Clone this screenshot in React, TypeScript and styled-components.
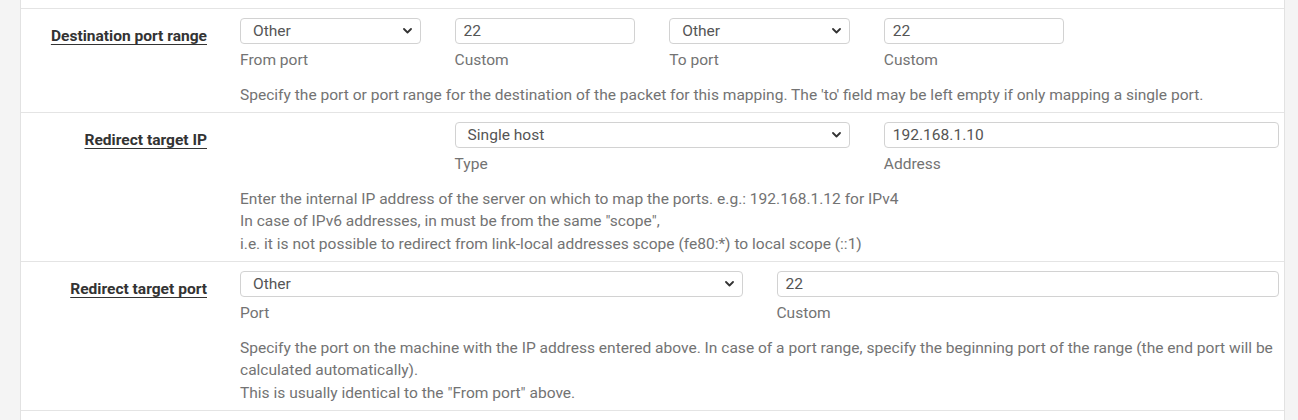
import React from "react";
import styled, { createGlobalStyle } from "styled-components";

const GlobalStyle = createGlobalStyle`
  html, body { margin: 0; padding: 0; }
  body {
    background: #f4f4f4;
    font-family: Roboto, "Liberation Sans", sans-serif;
    font-size: 15.55px;
    line-height: 22.5px;
    color: #333;
  }
`;

const Page = styled.div`
  padding: 0 13px 0 20px;
  height: 420px;
  overflow: hidden;
`;

const Panel = styled.div`
  background: #fff;
  border-left: 1px solid #e2e2e2;
  border-right: 1px solid #e2e2e2;
  padding-top: 8px;
  height: 412px;
`;

const Row = styled.div`
  display: grid;
  grid-template-columns: 219px 1039px;
  border-top: 1px solid #e4e4e4;
  padding: 9px 0 6px;
  &:last-child { border-bottom: 1px solid #e4e4e4; }
`;

const Label = styled.div`
  text-align: right;
  padding: 7px 33px 0 0;
  font-weight: 700;
  color: #333;
`;

const LabelText = styled.span`
  text-decoration: underline;
  text-decoration-thickness: 1px;
  text-underline-offset: 3px;
`;

const Content = styled.div`
  display: grid;
  grid-template-columns: repeat(10, 1fr);
  column-gap: 34px;
`;

const Field = styled.div<{ $start: number; $span: number }>`
  grid-column: ${(p) => p.$start} / span ${(p) => p.$span};
  display: flex;
  flex-direction: column;
`;

const Control = styled.div`
  box-sizing: border-box;
  height: 26px;
  border: 1px solid #d2d2d2;
  border-radius: 4px;
  background: #fff;
  color: #555;
  display: flex;
  align-items: center;
`;

const InputText = styled.span`
  padding-left: 8px;
`;

const SelectText = styled.span`
  padding-left: 12px;
  flex: 1;
`;

const Chevron = styled.svg`
  width: 9px;
  height: 6px;
  margin-right: 8px;
`;

const SubLabel = styled.div`
  margin-top: 5px;
  color: #737373;
`;

const Help = styled.div`
  grid-column: 1 / span 10;
  margin-top: 12px;
  color: #737373;
  white-space: nowrap;
`;

const ChevronIcon = () => (
  <Chevron viewBox="0 0 9 6">
    <path d="M1 1 L4.5 4.5 L8 1" fill="none" stroke="#333" strokeWidth="1.8" strokeLinecap="round" strokeLinejoin="round" />
  </Chevron>
);

const SelectBox = ({ value }: { value: string }) => (
  <Control>
    <SelectText>{value}</SelectText>
    <ChevronIcon />
  </Control>
);

const InputBox = ({ value }: { value: string }) => (
  <Control>
    <InputText>{value}</InputText>
  </Control>
);

export default function App() {
  return (
    <>
      <GlobalStyle />
      <Page>
        <Panel>
          <Row>
            <Label><LabelText>Destination port range</LabelText></Label>
            <Content>
              <Field $start={1} $span={2}>
                <SelectBox value="Other" />
                <SubLabel>From port</SubLabel>
              </Field>
              <Field $start={3} $span={2}>
                <InputBox value="22" />
                <SubLabel>Custom</SubLabel>
              </Field>
              <Field $start={5} $span={2}>
                <SelectBox value="Other" />
                <SubLabel>To port</SubLabel>
              </Field>
              <Field $start={7} $span={2}>
                <InputBox value="22" />
                <SubLabel>Custom</SubLabel>
              </Field>
              <Help>
                Specify the port or port range for the destination of the packet for this mapping. The 'to' field may be left empty if only mapping a single port.
              </Help>
            </Content>
          </Row>
          <Row>
            <Label><LabelText>Redirect target IP</LabelText></Label>
            <Content>
              <Field $start={3} $span={4}>
                <SelectBox value="Single host" />
                <SubLabel>Type</SubLabel>
              </Field>
              <Field $start={7} $span={4}>
                <InputBox value="192.168.1.10" />
                <SubLabel>Address</SubLabel>
              </Field>
              <Help>
                Enter the internal IP address of the server on which to map the ports. e.g.: 192.168.1.12 for IPv4
                <br />
                In case of IPv6 addresses, in must be from the same "scope",
                <br />
                i.e. it is not possible to redirect from link-local addresses scope (fe80:*) to local scope (::1)
              </Help>
            </Content>
          </Row>
          <Row>
            <Label><LabelText>Redirect target port</LabelText></Label>
            <Content>
              <Field $start={1} $span={5}>
                <SelectBox value="Other" />
                <SubLabel>Port</SubLabel>
              </Field>
              <Field $start={6} $span={5}>
                <InputBox value="22" />
                <SubLabel>Custom</SubLabel>
              </Field>
              <Help>
                Specify the port on the machine with the IP address entered above. In case of a port range, specify the beginning port of the range (the end port will be
                <br />
                calculated automatically).
                <br />
                This is usually identical to the "From port" above.
              </Help>
            </Content>
          </Row>
        </Panel>
      </Page>
    </>
  );
}
